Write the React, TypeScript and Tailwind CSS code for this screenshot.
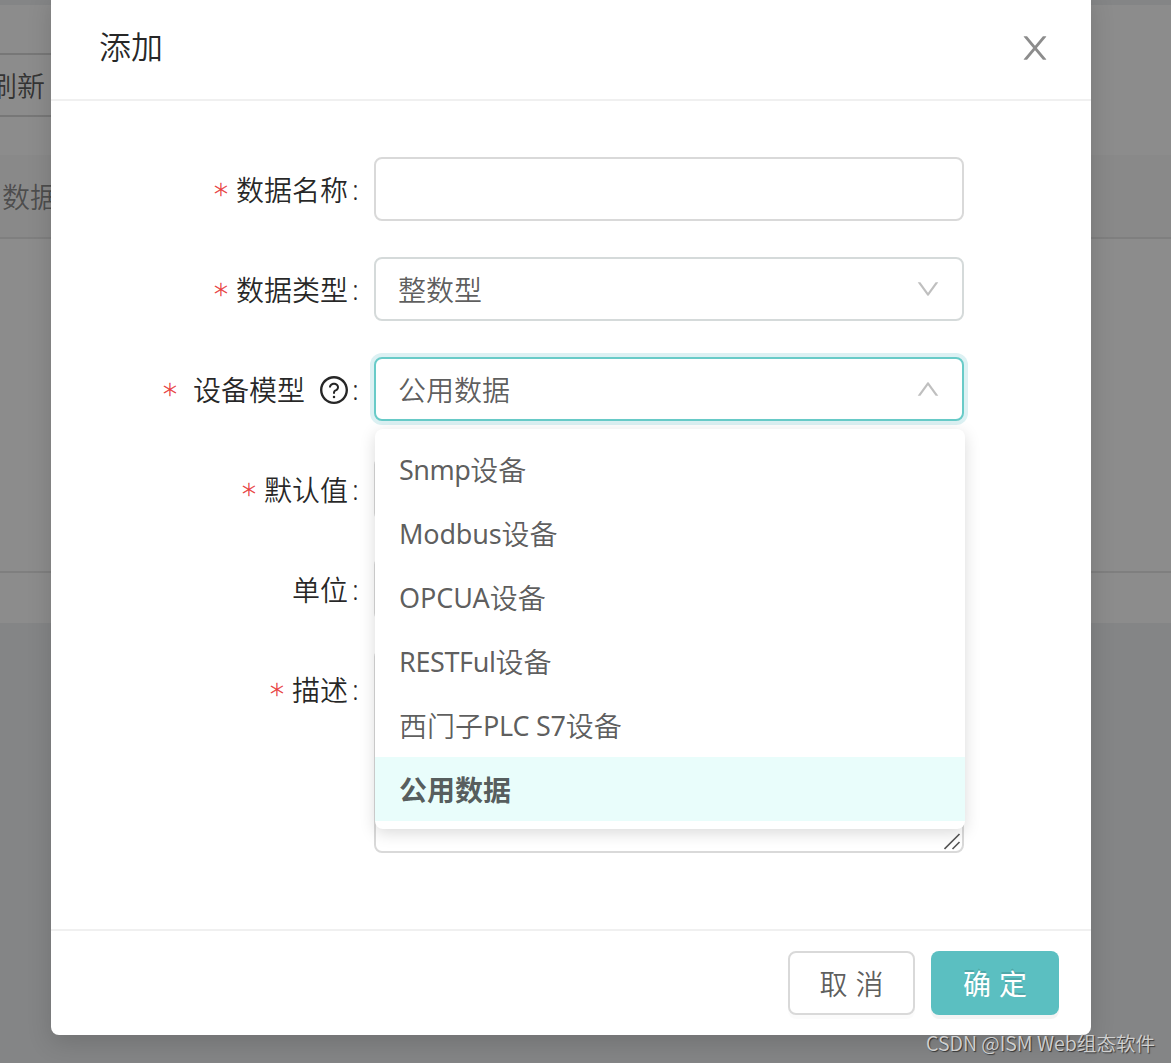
import { useState, type ReactNode } from "react";
import clsx from "clsx";

const MODELS = [
  { latin: "Snmp", text: "设备", cls: "tracking-[-0.5px]" },
  { latin: "Modbus", text: "设备", cls: "tracking-[-0.2px]" },
  { latin: "OPCUA", text: "设备", cls: "tracking-[-0.1px]" },
  { latin: "RESTFul", text: "设备", cls: "tracking-[-0.4px]" },
  { prefix: "西门子", latin: "PLC S7", text: "设备", cls: "tracking-[-0.25px]" },
  { latin: "", text: "公用数据", cls: "" },
];

const boxCls =
  "flex h-16 w-[590px] items-center justify-between rounded-lg border-2 bg-white pt-0.5 pr-[22px] pl-[22px] text-black/65";

function CloseIcon() {
  return (
    <svg viewBox="64 64 896 896" className="size-8 fill-black/45">
      <path d="M563.8 512l262.5-312.9c4.4-5.2.7-13.1-6.1-13.1h-79.8c-4.7 0-9.2 2.1-12.3 5.7L511.6 449.8 295.1 191.7c-3-3.6-7.5-5.7-12.3-5.7H203c-6.8 0-10.5 7.9-6.1 13.1L459.4 512 196.9 824.9A7.95 7.95 0 0 0 203 838h79.8c4.7 0 9.2-2.1 12.3-5.7l216.5-258.1 216.5 258.1c3 3.6 7.5 5.7 12.3 5.7h79.8c6.8 0 10.5-7.9 6.1-13.1L563.8 512z" />
    </svg>
  );
}

function ArrowIcon({ open }: { open?: boolean }) {
  return (
    <svg
      viewBox="64 64 896 896"
      className={clsx("mb-0.5 size-6 fill-black/25", open && "rotate-180")}
    >
      <path d="M884 256h-75c-5.1 0-9.9 2.5-12.9 6.6L512 654.2 227.9 262.6c-3-4.1-7.8-6.6-12.9-6.6h-75c-6.5 0-10.3 7.4-6.5 12.7l352.6 486.1c12.8 17.6 39 17.6 51.7 0l352.6-486.1c3.9-5.3.1-12.7-6.4-12.7z" />
    </svg>
  );
}

function QuestionIcon() {
  return (
    <svg viewBox="64 64 896 896" className="ml-[15px] size-7 fill-black/85">
      <path d="M512 64C264.6 64 64 264.6 64 512s200.6 448 448 448 448-200.6 448-448S759.4 64 512 64zm0 820c-205.4 0-372-166.6-372-372s166.6-372 372-372 372 166.6 372 372-166.6 372-372 372z" />
      <path d="M623.6 316.7C593.6 290.4 554 276 512 276s-81.6 14.5-111.6 40.7C369.2 344 352 380.7 352 420v7.6c0 4.4 3.6 8 8 8h48c4.4 0 8-3.6 8-8V420c0-44.1 43.1-80 96-80s96 35.9 96 80c0 31.1-22 59.6-56.1 72.7-21.2 8.1-39.2 22.3-52.1 40.9-13.1 19-19.9 41.8-19.9 64.9V620c0 4.4 3.6 8 8 8h48c4.4 0 8-3.6 8-8v-22.7a48.3 48.3 0 0 1 30.9-44.8c59-22.7 97.1-74.7 97.1-132.5.1-39.3-17.1-76-48.3-103.3zM472 732a40 40 0 1 0 80 0 40 40 0 1 0-80 0z" />
    </svg>
  );
}

function Field({
  label,
  required,
  help,
  children,
}: {
  label: string;
  required?: boolean;
  help?: boolean;
  children: ReactNode;
}) {
  return (
    <div className="flex items-start">
      <div className="flex h-16 w-[323px] shrink-0 items-center justify-end pt-0.5 pr-[15px] text-black/85">
        {required && (
          <span
            className={clsx(
              "w-[14px] pt-[10px] text-center font-['DejaVu_Sans'] text-[28px] leading-7 font-light text-[#e83a3a] [-webkit-text-stroke:0.4px_#e83a3a]",
              help ? "mr-4" : "mr-2",
            )}
          >
            *
          </span>
        )}
        <span>{label}</span>
        {help && <QuestionIcon />}
        <span className="mb-[3px] ml-1 w-[7px] text-center">:</span>
      </div>
      {children}
    </div>
  );
}

// Page that sits behind the modal mask
function BackPage() {
  return (
    <div className="h-[1063px] bg-[#f0f2f5] pt-[5px]">
      <div className="h-[618px] bg-white pt-12">
        <div className="flex h-16 w-20 items-center border-y-2 border-[#d9d9d9] pt-0.5">
          <span className="-ml-[11px] text-black/65">刷新</span>
        </div>
        <div className="mt-[38px] flex h-[84px] items-center border-b-2 border-[#e8e8e8] bg-[#fafafa] pt-px pl-[2px] text-black/45">
          数据
        </div>
        <div className="h-[334px] border-b-2 border-[#e8e8e8]" />
      </div>
    </div>
  );
}

export default function App() {
  const [model, setModel] = useState("公用数据");

  return (
    <div className="relative h-[1063px] w-[1171px] overflow-hidden font-['Noto_Sans','Noto_Sans_CJK_SC',sans-serif] text-[28px] leading-[42px] font-[350]">
      <BackPage />
      <div className="absolute inset-0 bg-black/45" />

      <div className="absolute -top-[9px] left-[51px] w-[1040px] rounded-lg bg-white shadow-[0_8px_24px_rgba(0,0,0,0.15)]">
        <div className="flex h-[110px] items-center justify-between border-b-2 border-[#f0f0f0] pt-[6px] pr-10 pl-12">
          <h2 className="mb-0.5 text-[32px] leading-[44px] text-black/85">添加</h2>
          <button type="button" aria-label="关闭">
            <CloseIcon />
          </button>
        </div>

        <form className="flex h-[828px] flex-col gap-9 pt-14">
          <Field label="数据名称" required>
            <input className={clsx(boxCls, "border-[#d9d9d9] outline-none")} />
          </Field>
          <Field label="数据类型" required>
            <div className={clsx(boxCls, "border-[#d5dada]")}>
              整数型
              <ArrowIcon />
            </div>
          </Field>
          <Field label="设备模型" required help>
            <div className="relative">
              <div className={clsx(boxCls, "border-[#68cbc8] shadow-[0_0_0_4px_#dcf1f3]")}>
                {model}
                <ArrowIcon open />
              </div>
              <ul className="absolute top-[72px] left-px z-10 w-[590px] rounded-lg bg-white py-2 shadow-[0_4px_16px_rgba(0,0,0,0.15)]">
                {MODELS.map((m) => {
                  const name = (m.prefix ?? "") + m.latin + m.text;
                  return (
                    <li
                      key={name}
                      onClick={() => setModel(name)}
                      className={clsx(
                        "flex h-16 items-center px-6 pt-0.5 whitespace-pre text-black/65",
                        name === model && "bg-[#e9fdfb] font-semibold",
                      )}
                    >
                      {m.prefix}
                      <span className={clsx("text-[27px] font-normal", m.cls)}>{m.latin}</span>
                      {m.text}
                    </li>
                  );
                })}
              </ul>
            </div>
          </Field>
          <Field label="默认值" required>
            <input className={clsx(boxCls, "border-[#d9d9d9] outline-none")} />
          </Field>
          <Field label="单位">
            <input className={clsx(boxCls, "border-[#d9d9d9] outline-none")} />
          </Field>
          <Field label="描述" required>
            <div className="-mt-2 flex h-[204px] w-[590px] items-end justify-end rounded-lg border-2 border-[#d9d9d9]">
              <svg viewBox="0 0 18 18" className="size-[18px] stroke-[#555]" strokeWidth="1.6">
                <path d="M0.5 16L15.5 1M8.5 16L15.5 9" />
              </svg>
            </div>
          </Field>
        </form>

        <div className="flex h-[106px] items-center justify-end gap-4 border-t-2 border-[#f0f0f0] pr-8">
          <button
            type="button"
            className="h-16 w-[127px] rounded-lg border-2 border-[#d9d9d9] bg-white pt-0.5 pl-2 tracking-[8px] text-black/65 shadow-[0_4px_0_rgba(0,0,0,0.016)]"
          >
            取消
          </button>
          <button
            type="button"
            className="h-16 w-32 rounded-lg bg-[#5bbfc1] pt-0.5 pl-2 font-normal tracking-[8px] text-white shadow-[0_4px_0_rgba(0,0,0,0.045)] [text-shadow:0_-2px_0_rgba(0,0,0,0.12)]"
          >
            确定
          </button>
        </div>
      </div>

      <div className="absolute top-[1029px] left-[926px] font-['Noto_Sans_CJK_SC',sans-serif] text-[19.6px] leading-7 whitespace-nowrap text-[#d0d0d0] [text-shadow:1px_1px_1px_rgba(0,0,0,0.6)]">
        CSDN @ISM Web组态软件
      </div>
    </div>
  );
}
